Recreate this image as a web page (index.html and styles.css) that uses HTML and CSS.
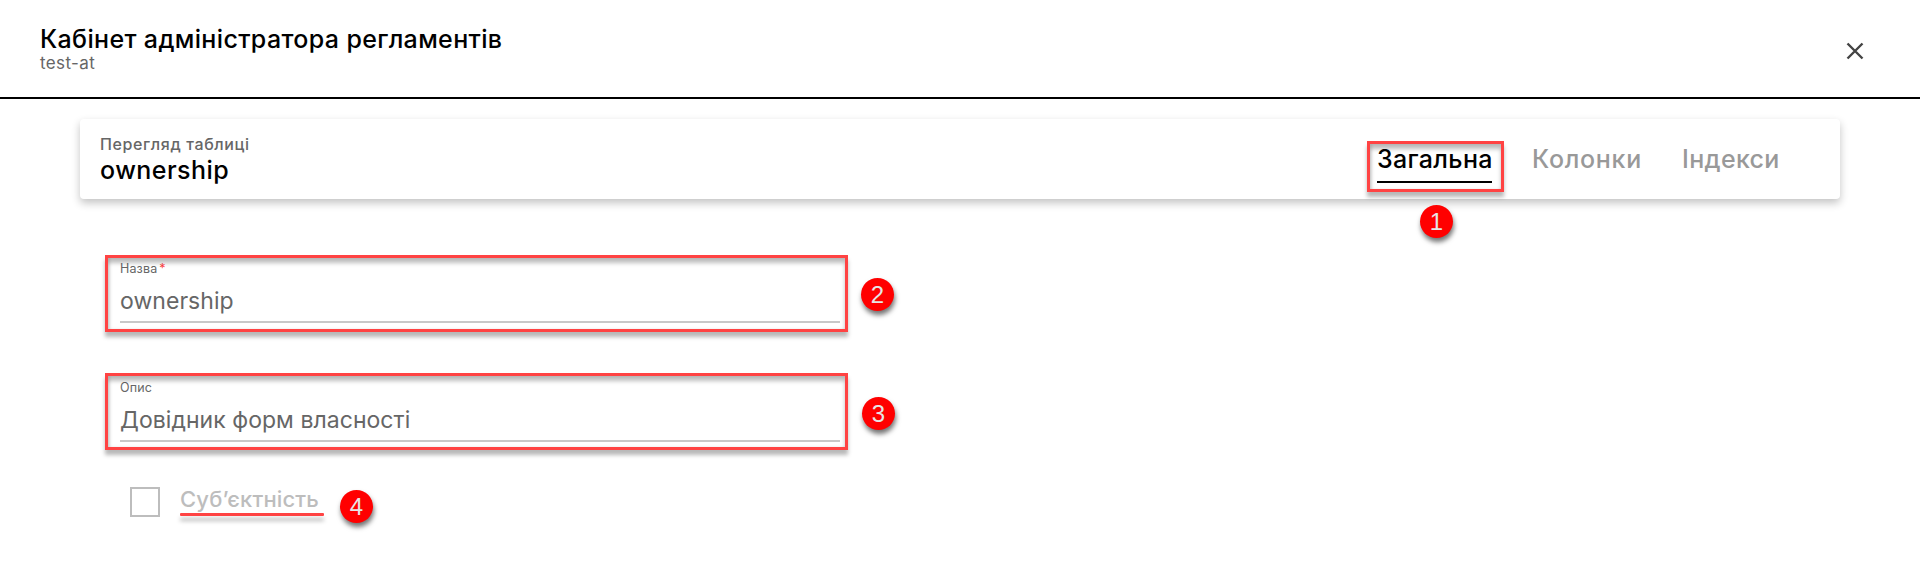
FILE: index.html
```html
<!DOCTYPE html>
<html lang="uk">
<head>
<meta charset="utf-8">
<title>Кабінет адміністратора регламентів</title>
<link rel="stylesheet" href="styles.css">
</head>
<body>
<header class="header">
  <div>
    <div class="app-title"><span>Кабінет адміністратора регламентів</span></div>
    <div class="app-sub"><span>test-at</span></div>
  </div>
  <button class="close" aria-label="Закрити">
    <svg width="18" height="18" viewBox="0 0 18 18"><path d="M1.5 1.5 16.5 16.5M16.5 1.5 1.5 16.5" stroke="#444" stroke-width="2.4" fill="none"/></svg>
  </button>
</header>
<main class="main">
  <section class="card">
    <div>
      <div class="card-label"><span>Перегляд таблиці</span></div>
      <div class="card-title"><span>ownership</span></div>
    </div>
    <nav class="tabs">
      <a class="tab tab-active tab-general"><span>Загальна</span><i class="frame frame-tab"></i><b class="badge badge-1">1</b></a>
      <a class="tab tab-columns"><span>Колонки</span></a>
      <a class="tab tab-indexes"><span>Індекси</span></a>
    </nav>
  </section>
  <form class="form">
    <div class="field">
      <div class="field-label"><span>Назва</span><span class="req">*</span></div>
      <div class="field-value"><span>ownership</span></div>
      <i class="frame frame-field"></i><b class="badge badge-2">2</b>
    </div>
    <div class="field field-second">
      <div class="field-label"><span>Опис</span></div>
      <div class="field-value"><span>Довідник форм власності</span></div>
      <i class="frame frame-field frame-field-second"></i><b class="badge badge-3">3</b>
    </div>
    <div class="check">
      <span class="box"></span>
      <span class="check-label"><span>Суб’єктність</span><i class="mark"></i></span>
      <b class="badge badge-4">4</b>
    </div>
  </form>
</main>
</body>
</html>
```
FILE: styles.css
```css
* { box-sizing: border-box; }
body { margin: 0; background: #fff; color: #000; font-family: Inter, "Noto Sans", sans-serif; height: 571px; overflow: hidden; }
.header { display: flex; justify-content: space-between; height: 99px; padding: 24px 56px 0 40px; border-bottom: 2px solid #000; }
.app-title { font-size: 25px; line-height: 30px; font-weight: 500; letter-spacing: 0.35px; white-space: nowrap; }
.app-sub { font-size: 17px; line-height: 19px; color: #666; letter-spacing: 0.4px; }
.close { height: 18px; margin-top: 18px; padding: 0; border: 0; background: none; display: flex; }
.main { padding: 20px 80px 0; }
.card { display: flex; justify-content: space-between; height: 80px; padding: 14px 60px 0 20px; border-radius: 4px; background: #fff; box-shadow: 0 4px 8px rgba(0,0,0,.24); }
.card-label { font-size: 16px; line-height: 22px; font-weight: 500; color: #666; letter-spacing: 0.63px; }
.card-title { font-size: 25px; line-height: 31px; font-weight: 500; letter-spacing: 0.45px; }
.tabs { display: flex; gap: 40px; padding-top: 12px; font-size: 25px; line-height: 29px; font-weight: 500; color: #999; letter-spacing: 0.34px; }
.tab { position: relative; height: 38px; white-space: nowrap; }
.tab-general { width: 115px; }
.tab-columns { width: 110px; letter-spacing: 0.7px; }
.tab-indexes { width: 98px; }
.tab-active { color: #000; border-bottom: 2px solid #000; }
.frame { position: absolute; border: 3px solid #ff4343; box-shadow: 0 5px 4px rgba(0,0,0,.28), inset 0 5px 4px rgba(0,0,0,.26), inset 2px 0 3px rgba(0,0,0,.1); }
.frame-tab { left: -10px; top: -4px; width: 137px; height: 51px; }
.badge { position: absolute; width: 33px; height: 33px; border-radius: 50%; background: #f00; color: #e6e6e6; font: 400 24px/34px "Liberation Sans", Arial, sans-serif; text-align: center; letter-spacing: 0; box-shadow: 1px 4px 5px rgba(0,0,0,.55); }
.badge-1 { left: 43px; top: 59.5px; }
.form { padding: 60px 40px 0; }
.field { position: relative; width: 720px; height: 64px; border-bottom: 2px solid #c8c8c8; color: #666; }
.field-second { margin-top: 55px; }
.field-label { display: flex; gap: 2px; font-size: 12.5px; line-height: 20px; letter-spacing: 0.15px; }
.field-value { font-size: 23px; line-height: 32px; margin-top: 6px; letter-spacing: 0.05px; }
.req { color: #ff4343; }
.frame-field { left: -15px; top: -4px; width: 743px; height: 77px; }
.frame-field-second { top: -5px; }
.badge-2 { left: 741px; top: 19px; }
.badge-3 { left: 742px; top: 19px; }
.check { position: relative; display: flex; gap: 20px; margin: 45px 0 0 10px; }
.box { width: 30px; height: 30px; border: 2px solid #bdbdbd; }
.check-label { position: relative; font-size: 22px; line-height: 24px; font-weight: 500; color: #bdbdbd; letter-spacing: 0.15px; }
.mark { position: absolute; left: 0; top: 26px; width: 144px; height: 3px; border-radius: 1px; background: #ff4343; box-shadow: 0 5px 4px rgba(0,0,0,.28); }
.badge-4 { left: 210px; top: 3px; }
```
